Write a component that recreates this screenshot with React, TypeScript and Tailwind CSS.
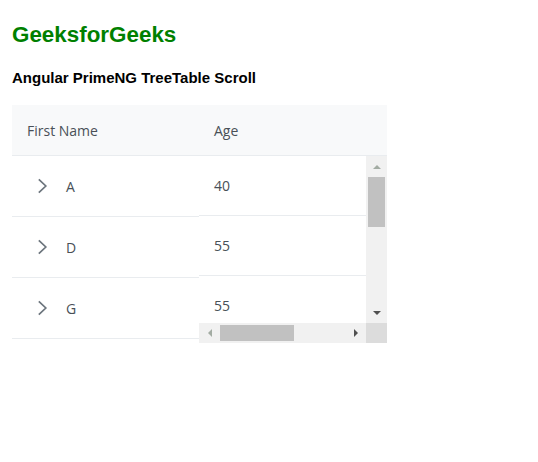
import React from "react";

const rows = [
  { name: "A", age: "40" },
  { name: "D", age: "55" },
  { name: "G", age: "55" },
];

function Chevron() {
  return (
    <svg width="14" height="14" viewBox="0 0 14 14" className="shrink-0 overflow-visible">
      <path d="M1.8 0.3 L8.8 7 L1.8 13.7" fill="none" stroke="#6c757d" strokeWidth="1.7" />
    </svg>
  );
}

export default function App() {
  return (
    <div className="pl-3 pt-[22px] bg-white min-h-[462px]" style={{ fontFamily: "'Liberation Sans', Arial, sans-serif" }}>
      <h1 className="text-[22.4px] font-bold text-[#008000] leading-[25px]">GeeksforGeeks</h1>
      <h3 className="mt-[22px] text-[15px] font-bold text-black leading-[17px]">Angular PrimeNG TreeTable Scroll</h3>
      <div
        className="mt-[19px] flex w-[375px] text-[14px] text-[#495057]"
        style={{ fontFamily: "'Open Sans', 'Noto Sans', sans-serif" }}
      >
        {/* frozen column */}
        <div className="w-[187px] shrink-0 flex flex-col">
          <div className="h-[51px] bg-[#f8f9fa] border-b border-[#e9ecef] flex items-center pl-[15px] font-medium">
            First Name
          </div>
          {rows.map((r) => (
            <div key={r.name} className="h-[61px] border-b border-[#e9ecef] flex items-center pl-[16px]">
              <div className="w-8 h-8 flex items-center justify-center mr-[6px]">
                <Chevron />
              </div>
              <span>{r.name}</span>
            </div>
          ))}
        </div>
        {/* scrollable column */}
        <div className="w-[188px] flex flex-col">
          <div className="h-[51px] bg-[#f8f9fa] border-b border-[#e9ecef] flex items-center pl-[15px] font-medium">
            Age
          </div>
          <div className="flex">
            <div className="w-[167px] h-[167px] overflow-hidden">
              <div className="w-[420px]">
                {rows.map((r, i) => (
                  <div key={i} className="h-[60px] border-b border-[#e9ecef] flex items-center pl-[15px]">
                    {r.age}
                  </div>
                ))}
              </div>
            </div>
            <div className="w-[21px] h-[167px] bg-[#f1f1f1] relative flex flex-col items-center">
              <div className="h-[21px] w-full flex items-center justify-center">
                <div className="w-0 h-0 border-l-[4px] border-r-[4px] border-b-[4px] border-l-transparent border-r-transparent border-b-[#a3aca3]" />
              </div>
              <div className="w-[17px] h-[50px] bg-[#c1c1c1]" />
              <div className="flex-1" />
              <div className="h-[21px] w-full flex items-center justify-center">
                <div className="w-0 h-0 border-l-[4px] border-r-[4px] border-t-[4px] border-l-transparent border-r-transparent border-t-[#505050]" />
              </div>
            </div>
          </div>
          <div className="flex h-[20px]">
            <div className="w-[167px] h-full bg-[#f1f1f1] flex items-center">
              <div className="w-[21px] h-full flex items-center justify-center">
                <div className="w-0 h-0 border-t-[4px] border-b-[4px] border-r-[4px] border-t-transparent border-b-transparent border-r-[#a3aca3]" />
              </div>
              <div className="w-[74px] h-[16px] bg-[#c1c1c1]" />
              <div className="flex-1" />
              <div className="w-[21px] h-full flex items-center justify-center">
                <div className="w-0 h-0 border-t-[4px] border-b-[4px] border-l-[4px] border-t-transparent border-b-transparent border-l-[#505050]" />
              </div>
            </div>
            <div className="w-[21px] h-full bg-[#dcdcdc]" />
          </div>
        </div>
      </div>
    </div>
  );
}
